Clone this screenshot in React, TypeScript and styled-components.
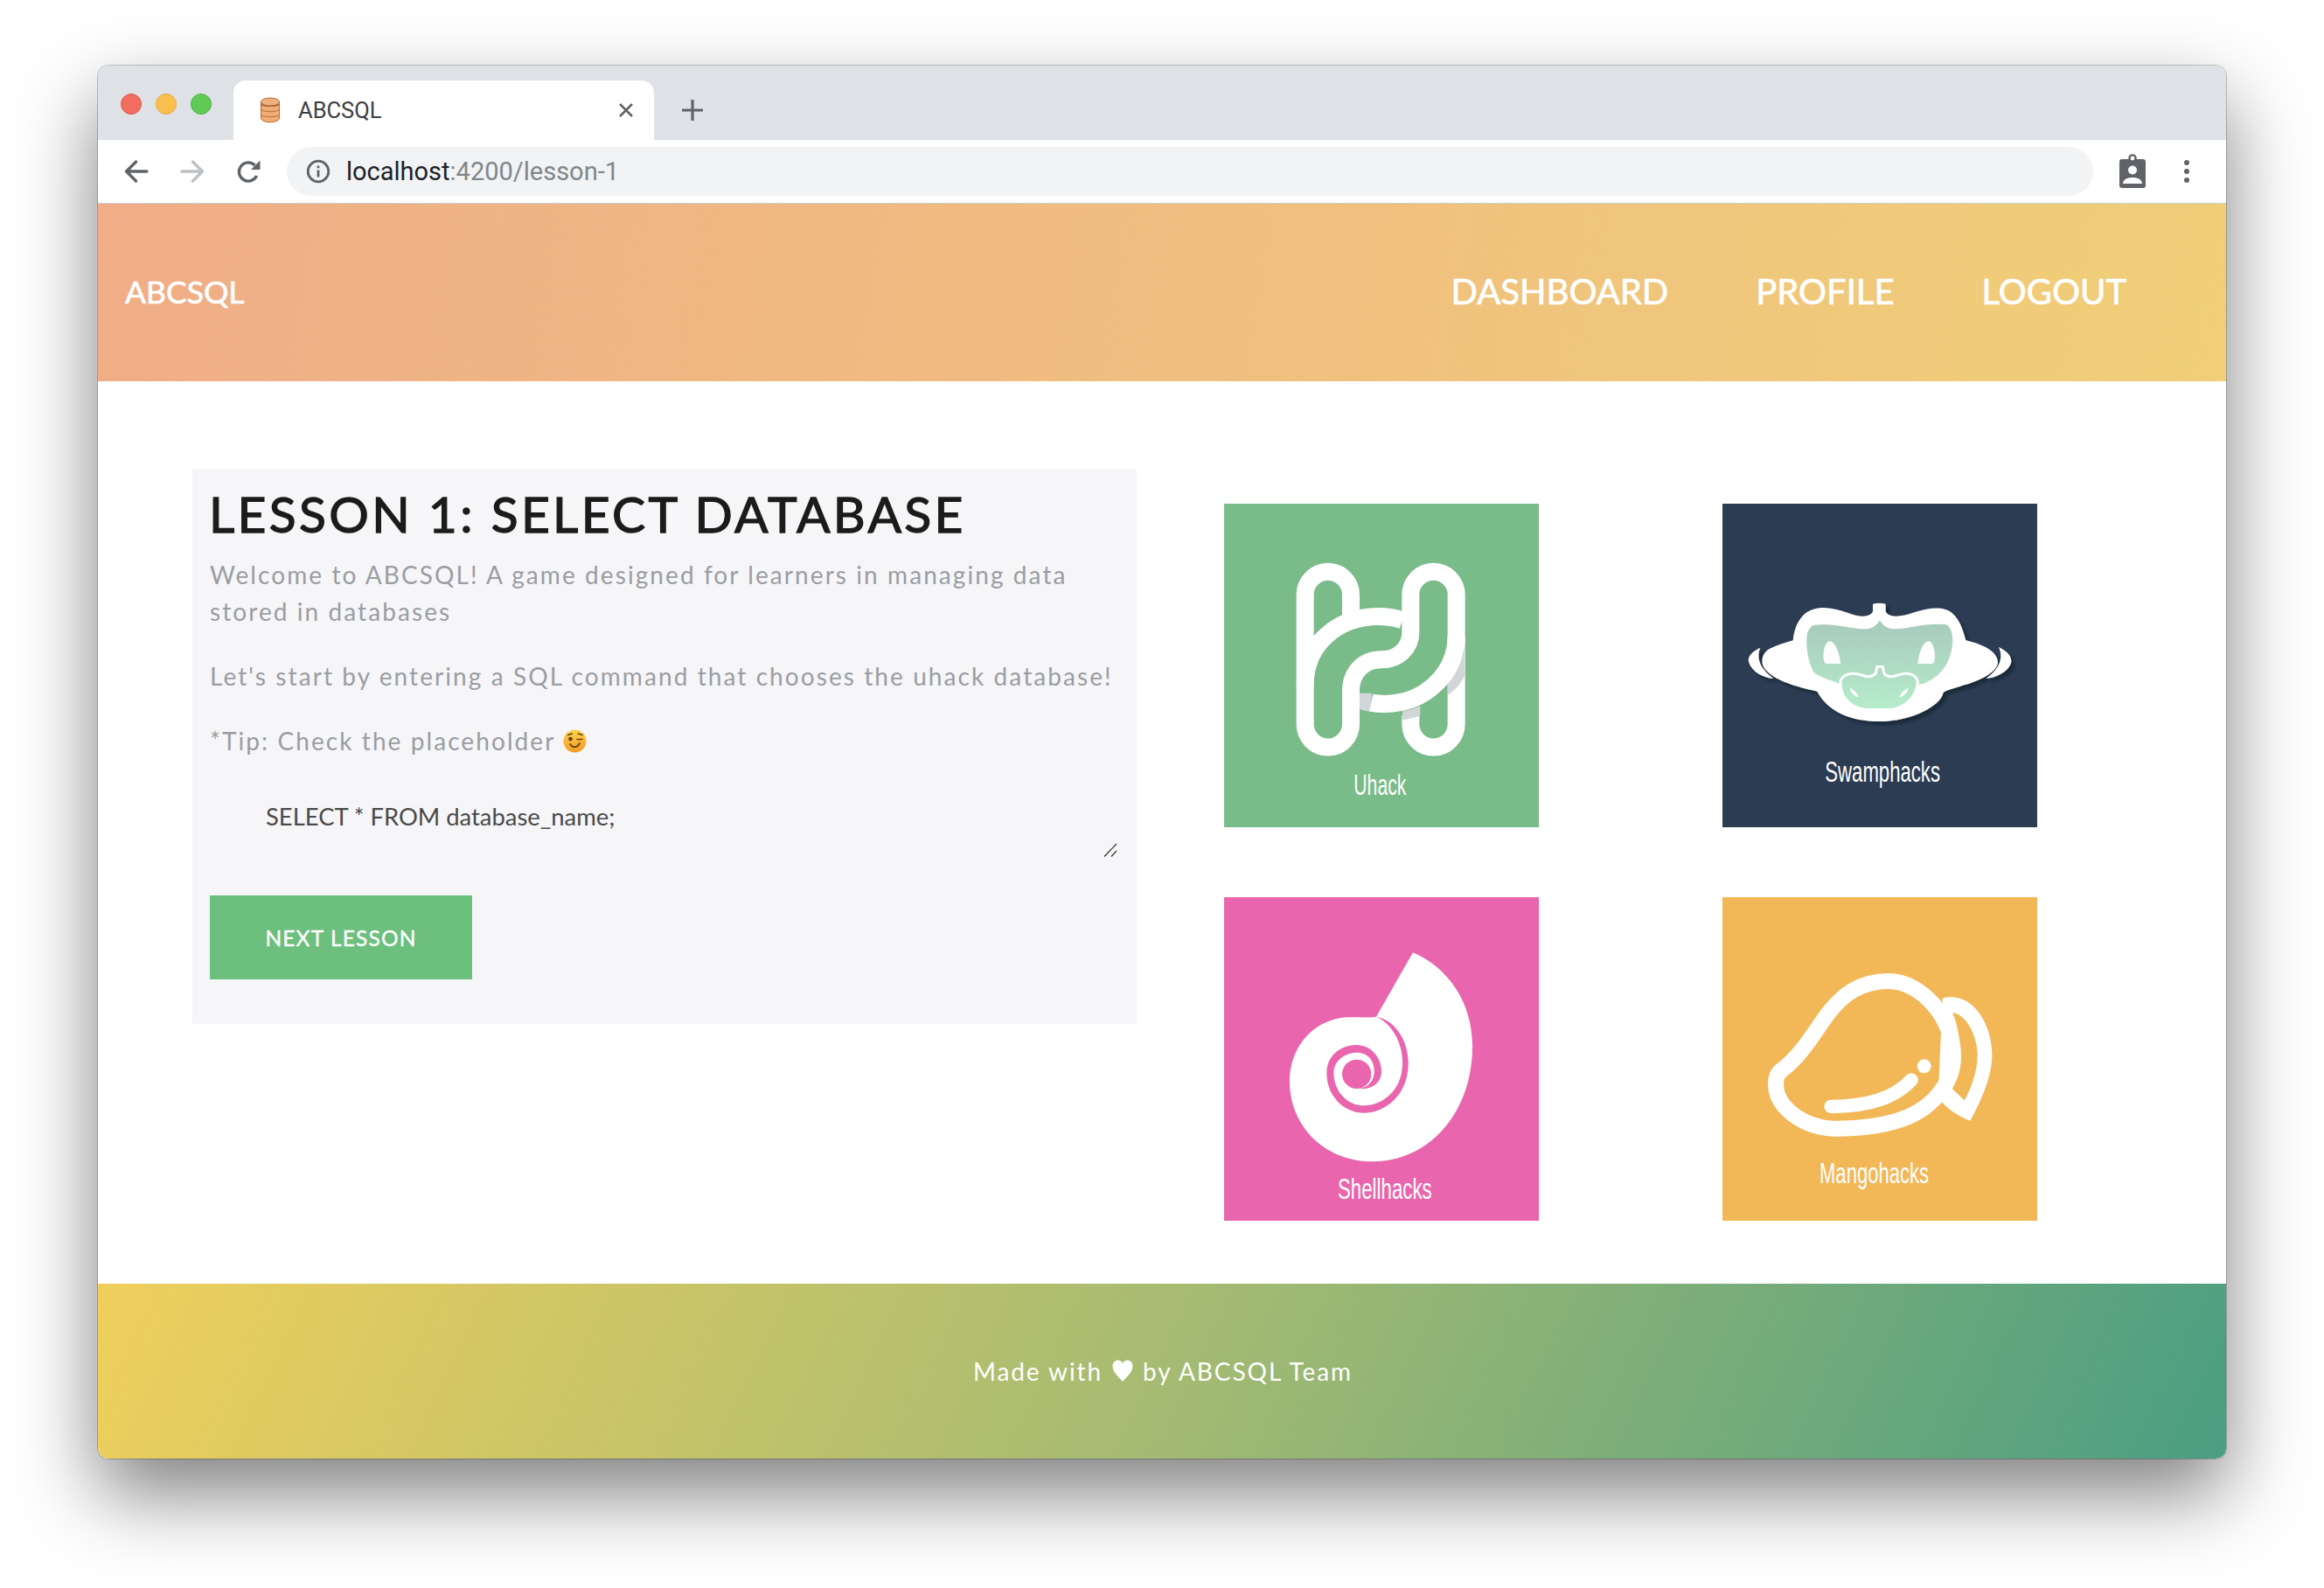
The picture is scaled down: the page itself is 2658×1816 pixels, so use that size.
import React from "react";
import styled, { createGlobalStyle } from "styled-components";

const Global = createGlobalStyle`
  html, body { margin: 0; padding: 0; background: #fff; }
  body { width: 2658px; height: 1816px; overflow: hidden; font-family: "Lato", "Noto Sans", sans-serif; }
  * { box-sizing: border-box; }
`;

const Page = styled.div`
  width: 2658px;
  height: 1816px;
  padding: 75px 112px 0;
`;
const Win = styled.div`
  width: 2434px;
  height: 1593px;
  border-radius: 12px;
  overflow: hidden;
  display: flex;
  flex-direction: column;
  background: #fff;
`;
const Frame = styled.div`
  width: 2434px;
  height: 1593px;
  border-radius: 12px;
  box-shadow: 0 0 0 1px rgba(0, 0, 0, 0.22), 0 40px 90px rgba(0, 0, 0, 0.5);
`;
const TabStrip = styled.div`
  height: 85px;
  background: #dee1e6;
  display: flex;
  align-items: flex-end;
  flex: none;
`;
const Lights = styled.div`
  width: 155px;
  height: 85px;
  padding: 32px 0 0 26px;
  display: flex;
  gap: 16px;
  flex: none;
`;
const Light = styled.span<{ $c: string; $b: string }>`
  width: 24px;
  height: 24px;
  border-radius: 50%;
  background: ${(p) => p.$c};
  border: 1px solid ${(p) => p.$b};
`;
const Tab = styled.div`
  width: 481px;
  height: 68px;
  background: #fff;
  border-radius: 14px 14px 0 0;
  display: flex;
  align-items: center;
  padding: 0 23px 0 30px;
  flex: none;
  color: #3c4043;
  font: 400 25.5px "Roboto", sans-serif;
`;
const TabTitle = styled.span`
  margin-left: 20px;
  flex: 1;
`;
const PlusWrap = styled.div`
  height: 68px;
  width: 88px;
  padding-left: 32px;
  display: flex;
  align-items: center;
`;
const Toolbar = styled.div`
  height: 73px;
  flex: none;
  display: flex;
  align-items: center;
  padding: 0 12px 0 28px;
  background: #fff;
  border-bottom: 1px solid #c8ccd0;
`;
const NavIcons = styled.div`
  display: flex;
  gap: 32px;
  width: 188px;
  flex: none;
`;
const Omni = styled.div`
  width: 2066px;
  height: 56px;
  border-radius: 28px;
  background: #f1f3f4;
  display: flex;
  align-items: center;
  padding-left: 22px;
  flex: none;
  font: 400 29px "Roboto", sans-serif;
  color: #202124;
`;
const Url = styled.span`
  margin-left: 18px;
`;
const UrlDim = styled.span`
  color: #80868b;
`;
const Tools = styled.div`
  display: flex;
  align-items: center;
  margin-left: 29px;
  gap: 42px;
`;
const Header = styled.header`
  height: 203px;
  flex: none;
  background: linear-gradient(100deg, #f0ad87 0%, #f0cf78 100%);
  display: flex;
  align-items: center;
  justify-content: space-between;
  padding: 0 114px 3px 31px;
  color: #fff;
  -webkit-text-stroke: 0.7px #fff;
`;
const Brand = styled.div`
  font-size: 35.5px;
`;
const NavLinks = styled.nav`
  display: flex;
  gap: 100px;
  font-size: 40px;
`;
const Main = styled.main`
  height: 1032px;
  flex: none;
  display: flex;
  align-items: flex-start;
  padding: 100px 0 0 108px;
  background: #fff;
`;
const Panel = styled.section`
  width: 1080px;
  height: 635px;
  background: #f6f6f8;
  padding: 0 20px;
  flex: none;
`;
const Title = styled.h1`
  margin: 15px 0 13px -1px;
  height: 72px;
  line-height: 72px;
  font-size: 57px;
  font-weight: 400;
  letter-spacing: 3.3px;
  -webkit-text-stroke: 1.3px #1b1b1b;
  color: #1b1b1b;
  white-space: nowrap;
`;
const Para = styled.p`
  width: 1056px;
  margin: 0 0 32px;
  font-size: 28px;
  line-height: 42px;
  letter-spacing: 2.08px;
  color: #9a9da3;
`;
const QueryBox = styled.div`
  position: relative;
  width: 1040px;
  height: 84px;
  margin-top: -1px;
`;
const Query = styled.textarea`
  display: block;
  width: 100%;
  height: 100%;
  padding: 18px 64px;
  border: 0;
  outline: 0;
  resize: none;
  background: transparent;
  font: 400 27.4px "Lato", sans-serif;
  &::placeholder {
    color: #4a4a4a;
    opacity: 1;
  }
`;
const Grip = styled.svg`
  position: absolute;
  right: 2px;
  bottom: 3px;
  width: 16px;
  height: 16px;
`;
const NextBtn = styled.button`
  display: block;
  margin-top: 41px;
  width: 300px;
  height: 96px;
  border: 0;
  padding: 0;
  background: #6cbf7c;
  color: #fff;
  font: 400 24.5px "Lato", sans-serif;
  letter-spacing: 1.15px;
  -webkit-text-stroke: 0.4px #fff;
`;
const Gallery = styled.div`
  margin: 40px 0 0 100px;
  display: grid;
  grid-template-columns: 360px 360px;
  grid-auto-rows: 370px;
  column-gap: 210px;
  row-gap: 80px;
`;
const Card = styled.svg`
  display: block;
  width: 360px;
  height: 370px;
`;
const Label = styled.text`
  font-family: "Liberation Sans", sans-serif;
  fill: #fff;
  font-size: 100px;
`;
const Footer = styled.footer`
  height: 200px;
  flex: none;
  background: linear-gradient(115deg, #efcf5c 0%, #a6bb72 50%, #4a9e82 100%);
  display: flex;
  align-items: center;
  justify-content: center;
  gap: 11px;
  color: #fff;
  font-size: 28px;
  letter-spacing: 1.9px;
  padding-left: 2px;
`;

const Favicon = () => (
  <svg width="24" height="30" viewBox="0 0 24 30">
    <path d="M1.5 5.5V24c0 2.6 4.5 4.7 10.5 4.7S22.5 26.6 22.5 24V5.5z" fill="#f0ad74" stroke="#b9682e" strokeWidth="1" />
    <ellipse cx="12" cy="5.5" rx="10.5" ry="4.5" fill="#eeb07c" stroke="#b9682e" strokeWidth="1" />
    <path d="M1.5 8c2 3 19 3 21 0" fill="none" stroke="#a9683a" strokeWidth="1.4" />
    <path d="M1.5 14c2 3.4 19 3.4 21 0M1.5 20c2 3.4 19 3.4 21 0" fill="none" stroke="#c07a42" strokeWidth="1.2" />
  </svg>
);

const CloseIcon = () => (
  <svg width="18" height="18" viewBox="0 0 18 18">
    <path d="M2 2l14 14M16 2L2 16" stroke="#5f6368" strokeWidth="2.6" />
  </svg>
);

const PlusIcon = () => (
  <svg width="24" height="24" viewBox="0 0 24 24">
    <path d="M12 1v22M1 12h22" stroke="#5f6368" strokeWidth="3.2" strokeLinecap="round" />
  </svg>
);

const Arrow = ({ flip, color }: { flip?: boolean; color: string }) => (
  <svg width="32" height="32" viewBox="0 0 32 32">
    <g transform={flip ? "matrix(-1 0 0 1 32 0)" : undefined} fill="none" stroke={color} strokeWidth="3.4" strokeLinecap="round" strokeLinejoin="round">
      <path d="M28 16H5M15.5 5L4.5 16l11 11" />
    </g>
  </svg>
);

const Reload = () => (
  <svg width="32" height="32" viewBox="0 0 32 32">
    <path d="M25.6 21A10.6 10.6 0 1 1 23.5 9" fill="none" stroke="#5f6368" strokeWidth="3.3" />
    <path d="M29.5 3.5V14h-10.5z" fill="#5f6368" />
  </svg>
);

const Info = () => (
  <svg width="28" height="28" viewBox="0 0 28 28">
    <circle cx="14" cy="14" r="11.8" fill="none" stroke="#5f6368" strokeWidth="2.8" />
    <path d="M14 12.5v8M14 7.5v2.8" stroke="#5f6368" strokeWidth="2.8" />
  </svg>
);

const Badge = () => (
  <svg width="32" height="40" viewBox="0 0 32 40">
    <rect x="1" y="6" width="30" height="33" rx="3" fill="#5f6368" />
    <circle cx="16" cy="5" r="3.6" fill="#fff" stroke="#5f6368" strokeWidth="2.4" />
    <circle cx="16" cy="18.5" r="5" fill="#fff" />
    <path d="M5 34c0-4.5 5-7 11-7s11 2.500 11 7z" fill="#fff" />
  </svg>
);

const Dots = () => (
  <svg width="8" height="30" viewBox="0 0 8 30">
    <circle cx="4" cy="5" r="3" fill="#5f6368" />
    <circle cx="4" cy="15" r="3" fill="#5f6368" />
    <circle cx="4" cy="25" r="3" fill="#5f6368" />
  </svg>
);

const Wink = () => (
  <svg width="27" height="27" viewBox="0 0 27 27" style={{ verticalAlign: "-3px" }}>
    <defs>
      <linearGradient id="wink" x1="0" y1="0" x2="0" y2="1">
        <stop offset="0" stopColor="#fcd34d" />
        <stop offset="1" stopColor="#f59a24" />
      </linearGradient>
    </defs>
    <circle cx="13.500" cy="13.500" r="13" fill="url(#wink)" />
    <circle cx="8.500" cy="11" r="2.300" fill="#5b3a12" />
    <path d="M16 11.500h6M5.500 6.500l5-1.500M17 5l5 1.500" stroke="#6b4515" strokeWidth="1.500" fill="none" strokeLinecap="round" />
    <path d="M8 17c3 4.500 8 4.500 11-1" stroke="#6b4515" strokeWidth="1.800" fill="none" strokeLinecap="round" />
  </svg>
);

const Heart = () => (
  <svg width="24" height="26" viewBox="0 0 24 26">
    <path d="M12 25C7 19 0.500 14 0.500 7.500 0.500 3 3.500 0.500 6.800 0.500 9 0.500 11 1.800 12 4.200 13 1.800 15 0.500 17.200 0.500 20.500 0.500 23.500 3 23.500 7.500 23.500 14 17 19 12 25z" fill="#fff" />
  </svg>
);

const cardBox = "60 48 1080 1110";

const UhackLogo = () => (
  <Card viewBox={cardBox}>
    <rect x="60" y="48" width="1080" height="1110" fill="#7abb8a" />
    <g fill="none" stroke="#fff" strokeWidth="60">
      <path d="M495 440V360A78.500 78.500 0 0 0 338 360V805A78.500 78.500 0 0 0 495 805V690C495 630 535 583 600 583C660 583 700 540 700 490V360A78.500 78.500 0 0 1 857 360V805A78.500 78.500 0 0 1 700 805V775" />
      <path d="M338 670C338 530 450 435 590 435C620 435 650 440 672 448" />
    </g>
    <path d="M885 530V640C870 670 850 690 828 705V665C860 630 878 580 885 530Z" fill="#d3d6d8" />
    <path d="M672 760C695 757 715 750 733 742V775C715 782 695 788 672 790Z" fill="#d3d6d8" />
    <path d="M525 698H566V762C550 760 535 757 525 752Z" fill="#d3d6d8" />
    <path d="M857 500C857 630 750 735 610 735C595 735 580 734 565 731" fill="none" stroke="#fff" strokeWidth="60" />
    <Label x="505" y="1047" textLength="180" lengthAdjust="spacingAndGlyphs">Uhack</Label>
  </Card>
);

const SwampLogo = () => (
  <Card viewBox={cardBox}>
    <defs>
      <linearGradient id="swamp" gradientUnits="userSpaceOnUse" x1="0" y1="460" x2="0" y2="750">
        <stop offset="0" stopColor="#a8cbbd" />
        <stop offset="1" stopColor="#b5ecca" />
      </linearGradient>
      <filter id="swampShadow" x="-10%" y="-10%" width="125%" height="130%">
        <feDropShadow dx="12" dy="12" stdDeviation="4" floodColor="#16202e" floodOpacity="0.7" />
      </filter>
    </defs>
    <rect x="60" y="48" width="1080" height="1110" fill="#2c3c52" />
    <g fill="#fff" filter="url(#swampShadow)">
      <path d="M576 392C590 388 606 388 620 392V418C630 440 670 438 720 420C770 405 820 398 850 425C875 448 885 480 895 517C930 525 1000 545 1005 590C1005 620 960 650 890 670C860 680 830 688 818 695C810 745 700 795 600 795C500 795 420 760 385 692C330 680 250 660 215 625C190 605 190 570 215 550C240 535 275 525 302 517C305 480 320 440 350 420C390 395 440 405 490 422C530 437 565 440 576 418Z" />
      <path d="M190 542C160 555 145 575 150 590C160 625 200 645 235 648C205 625 170 590 190 542Z" />
      <path d="M1008 540C1040 555 1055 575 1050 595C1040 625 1000 645 965 648C995 625 1030 590 1008 540Z" />
    </g>
    <path d="M372 465C440 455 500 478 550 478C575 478 590 465 600 448C610 465 625 478 650 478C700 478 760 455 830 463C850 480 852 510 848 540C840 590 815 640 750 665L600 700L460 665C420 650 385 640 372 625C355 590 345 540 350 500C352 485 360 472 372 465Z" fill="url(#swamp)" />
    <path d="M470 655C480 635 510 630 535 640C555 648 575 650 590 632L594 612H606L610 632C625 650 645 648 665 640C690 630 715 635 725 655C728 690 700 740 640 750H555C495 745 465 700 470 655Z" fill="url(#swamp)" stroke="#fff" strokeWidth="18" paintOrder="stroke" />
    <path d="M497 680C510 685 522 697 528 712C512 708 498 695 497 680Z" fill="#fff" />
    <path d="M698 680C685 685 673 697 667 712C683 708 697 695 698 680Z" fill="#fff" />
    <path d="M425 520C445 515 462 560 465 597H415C400 590 405 530 425 520Z" fill="#fff" />
    <path d="M770 520C750 515 733 560 730 597H780C795 590 790 530 770 520Z" fill="#fff" />
    <Label x="412" y="1003" textLength="395" lengthAdjust="spacingAndGlyphs">Swamphacks</Label>
  </Card>
);

const ShellLogo = () => (
  <Card viewBox={cardBox}>
    <rect x="60" y="48" width="1080" height="1110" fill="#e966ae" />
    <path d="M708 238C830 290 912 410 912 560C912 790 760 955 570 955C400 955 285 830 285 680C285 550 380 460 490 460C525 460 555 462 582 458Z" fill="#fff" />
    <path d="M582 458C650 470 695 545 692 625C690 720 620 788 540 788C465 788 412 725 412 650C412 592 460 555 515 555C565 555 602 600 600 650C596 690 565 708 520 705C555 700 573 680 575 650C577 610 555 581 515 581C475 581 436 610 436 650C436 710 480 763 540 763C605 763 670 710 672 622C675 550 635 480 582 458Z" fill="#e966ae" />
    <circle cx="515" cy="655" r="50" fill="#e966ae" />
    <Label x="450" y="1083" textLength="323" lengthAdjust="spacingAndGlyphs">Shellhacks</Label>
  </Card>
);

const MangoLogo = () => (
  <Card viewBox={cardBox}>
    <rect x="60" y="48" width="1080" height="1110" fill="#f2b858" />
    <path fillRule="evenodd" fill="#fff" d="M815 395C830 390 845 390 860 392C930 400 985 490 985 590C985 670 940 760 910 815C870 800 830 775 800 735ZM850 445C880 520 890 640 838 695L890 745C910 710 935 650 935 590C935 530 900 450 850 445Z" />
    <path d="M243 690C243 665 250 650 265 640C330 590 370 520 420 450C470 385 530 336 630 336C740 336 855 460 852 600C850 680 790 760 700 800C620 835 530 842 440 842C340 838 243 770 243 690Z" fill="none" stroke="#fff" strokeWidth="54" />
    <path d="M432 766C530 766 640 750 708 675" fill="none" stroke="#fff" strokeWidth="46" strokeLinecap="round" />
    <circle cx="752" cy="628" r="24" fill="#fff" />
    <Label x="393" y="1028" textLength="375" lengthAdjust="spacingAndGlyphs">Mangohacks</Label>
  </Card>
);

export default function App() {
  return (
    <Page>
      <Global />
      <Frame>
        <Win>
          <TabStrip>
            <Lights>
              <Light $c="#f26d60" $b="#e0574a" />
              <Light $c="#f9c04e" $b="#e3a93c" />
              <Light $c="#5fcb55" $b="#4eb545" />
            </Lights>
            <Tab>
              <Favicon />
              <TabTitle>ABCSQL</TabTitle>
              <CloseIcon />
            </Tab>
            <PlusWrap>
              <PlusIcon />
            </PlusWrap>
          </TabStrip>
          <Toolbar>
            <NavIcons>
              <Arrow color="#5f6368" />
              <Arrow flip color="#bdc1c6" />
              <Reload />
            </NavIcons>
            <Omni>
              <Info />
              <Url>
                localhost<UrlDim>:4200/lesson-1</UrlDim>
              </Url>
            </Omni>
            <Tools>
              <Badge />
              <Dots />
            </Tools>
          </Toolbar>
          <Header>
            <Brand>ABCSQL</Brand>
            <NavLinks>
              <span>DASHBOARD</span>
              <span>PROFILE</span>
              <span>LOGOUT</span>
            </NavLinks>
          </Header>
          <Main>
            <Panel>
              <Title>LESSON 1: SELECT DATABASE</Title>
              <Para>Welcome to ABCSQL! A game designed for learners in managing data stored in databases</Para>
              <Para>Let's start by entering a SQL command that chooses the uhack database!</Para>
              <Para>
                *Tip: Check the placeholder <Wink />
              </Para>
              <QueryBox>
                <Query placeholder="SELECT * FROM database_name;" />
                <Grip viewBox="0 0 16 16">
                  <path d="M1 15.500L15 1M9 15.500L15 9" stroke="#333" strokeWidth="1.200" fill="none" />
                </Grip>
              </QueryBox>
              <NextBtn>NEXT LESSON</NextBtn>
            </Panel>
            <Gallery>
              <UhackLogo />
              <SwampLogo />
              <ShellLogo />
              <MangoLogo />
            </Gallery>
          </Main>
          <Footer>
            <span>Made with</span>
            <Heart />
            <span>by ABCSQL Team</span>
          </Footer>
        </Win>
      </Frame>
    </Page>
  );
}
